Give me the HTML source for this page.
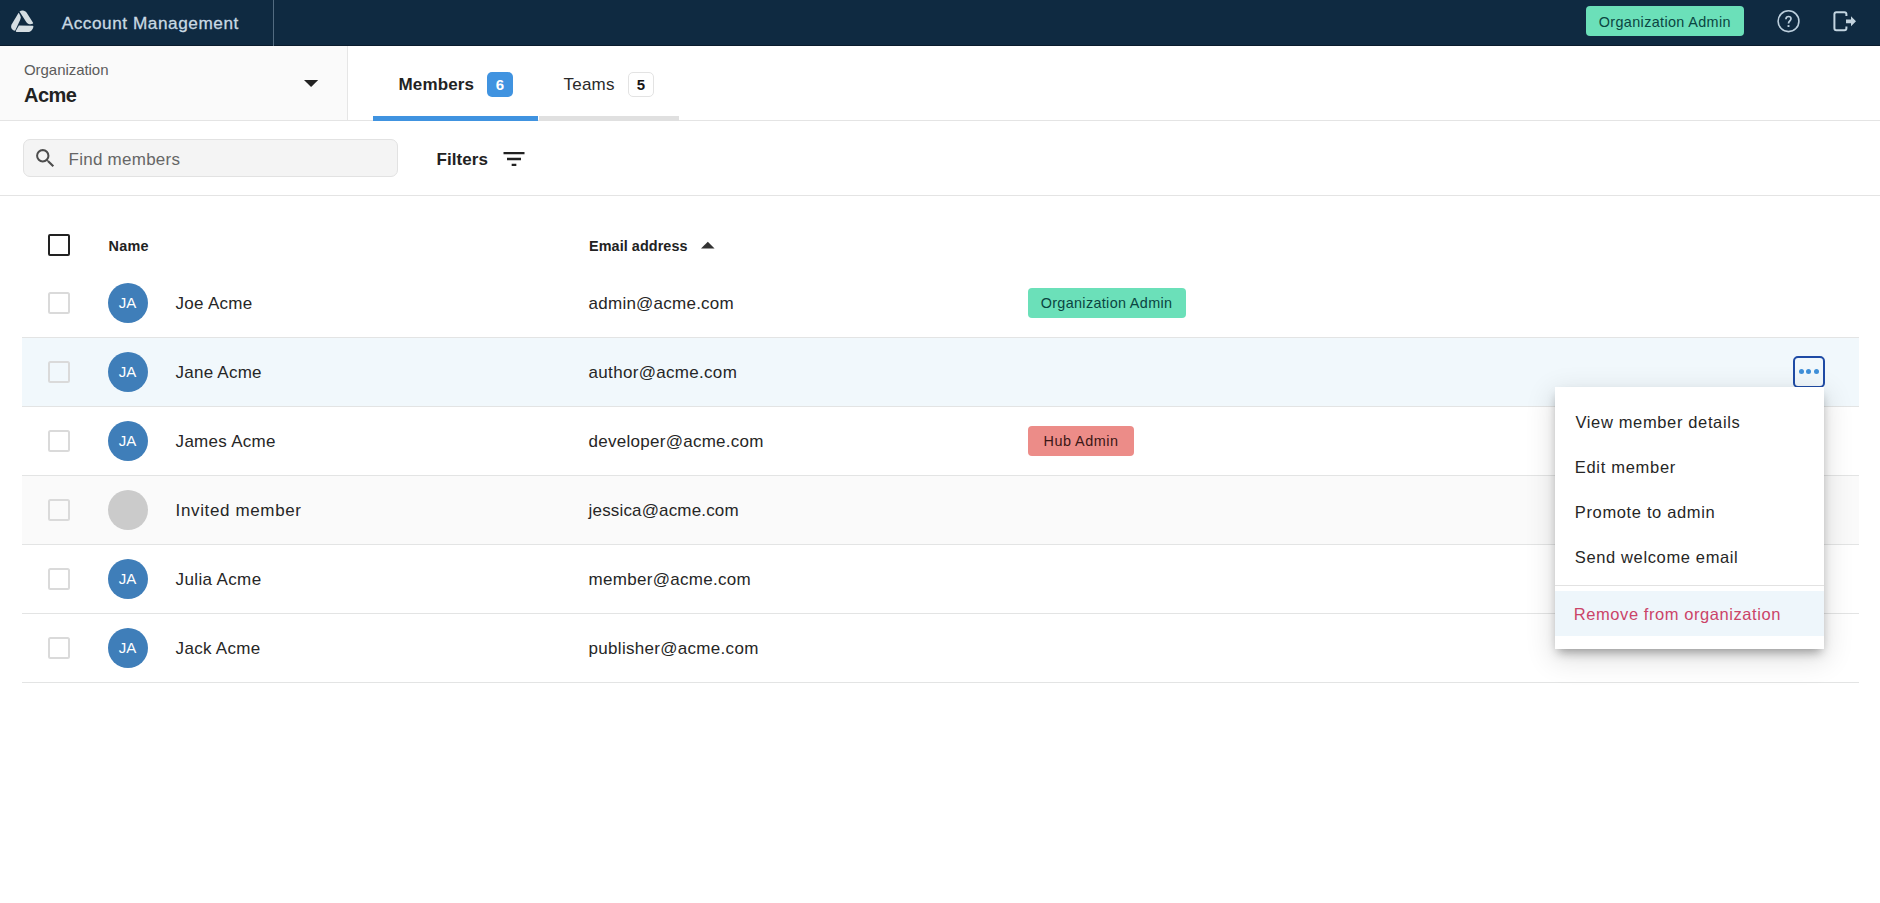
<!DOCTYPE html>
<html lang="en">
<head>
<meta charset="utf-8">
<title>Account Management</title>
<style>
html,body{margin:0;padding:0;}
body{width:1880px;height:903px;position:relative;overflow:hidden;background:#fff;font-family:"Liberation Sans",sans-serif;}
.a{position:absolute;}
.t{position:absolute;white-space:nowrap;font-family:"Liberation Sans",sans-serif;}
#hdr{left:0;top:0;width:1880px;height:46px;background:#0f2a41;box-shadow:inset 0 -1px 0 #0a1c2d;}
#hsep{left:273px;top:0;width:1px;height:46px;background:#526b80;}
.badge{border-radius:4px;height:30px;}
.green{background:#6be0b9;}
.red{background:#ec8c88;}
#org{left:0;top:46px;width:347px;height:74px;background:#fafafa;}
#orgsep{left:347px;top:46px;width:1px;height:74px;background:#e6e6e6;}
#hline{left:0;top:120px;width:1880px;height:1px;background:#e4e4e4;}
#tabu1{left:373px;top:116px;width:165px;height:5px;background:#4093e0;}
#tabu2{left:539px;top:116px;width:140px;height:5px;background:#e0e0e0;}
#cnt1{left:487px;top:72px;width:26px;height:25px;border-radius:5px;background:#4093e0;}
#cnt2{left:628px;top:72px;width:24px;height:23px;border-radius:5px;background:#fff;border:1px solid #e3e3e3;}
.cn{position:absolute;font-weight:700;font-size:15px;line-height:25.6px;text-align:center;width:26px;}
#search{left:23px;top:139px;width:373px;height:36px;border:1px solid #e2e2e2;border-radius:7px;background:#f4f4f4;}
#line2{left:0;top:195px;width:1880px;height:1px;background:#e4e4e4;}
.cb{left:48px;width:18px;height:18px;border:2px solid #dadada;border-radius:2.5px;background:transparent;}
#cbh{top:234px;border-color:#222;border-radius:2px;}
.row{left:22px;width:1837px;height:68px;border-bottom:1px solid #e3e4e4;}
.av{left:108px;width:40px;height:40px;border-radius:50%;background:#3f7eb9;}
#menu{left:1555px;top:387px;width:269px;height:262px;background:#fff;box-shadow:0 6px 10px -3px rgba(0,0,0,.36),0 8px 26px 3px rgba(0,0,0,.12);}
#msep{left:0;top:198px;width:269px;height:1px;background:#e2e2e2;}
#mhl{left:0;top:204px;width:269px;height:45px;background:#eef6fb;}
#dots{left:1793px;top:356px;width:28px;height:28px;border:2px solid #1f4ba5;border-radius:5px;}
.dot{position:absolute;width:5px;height:5px;border-radius:50%;background:#3f8fd8;top:10.9px;}
</style>
</head>
<body>
<div class="a" id="hdr"></div>
<div class="a" id="hsep"></div>
<svg class="a" style="left:8px;top:6px" width="30" height="30" viewBox="8 6 30 30">
  <g fill="#d5dee3">
    <path d="M18.6 12.7 C19.6 14.2 20.5 15.6 20.7 17.2 C20.8 18.3 20.5 19.2 20.0 20.3 L15.1 30.7 C13.4 30.6 12.2 29.7 11.6 28.6 C10.9 27.3 11.0 26.0 11.6 24.6 Z"/>
    <path d="M19.5 11.4 C20.5 10.6 21.6 10.3 22.8 10.4 C24.4 10.5 25.7 11.3 26.7 12.7 L32.9 22.5 C33.3 23.2 33.2 23.5 32.6 23.8 C31.4 24.3 29.8 24.3 28.6 23.9 C27.6 23.5 27.0 23.0 26.4 22.2 Z"/>
    <path d="M18.9 25.4 L32.8 25.8 C33.4 25.9 33.5 26.3 33.3 27.2 C33.0 28.3 32.6 29.2 31.9 30.0 C31.1 31.0 30.2 31.7 28.9 31.9 L16.5 31.9 C15.9 31.8 15.7 31.4 15.9 30.8 Z"/>
  </g>
</svg>
<div class="a badge green" style="left:1586px;top:6px;width:158px;"></div>
<svg class="a" style="left:1776px;top:9px" width="25" height="25" viewBox="0 0 25 25">
  <circle cx="12.5" cy="12.2" r="10.4" fill="none" stroke="#bccfdd" stroke-width="1.6"/>
  <path d="M9.9 10.2 C9.9 8.4 11.0 7.5 12.5 7.5 C14.0 7.5 15.0 8.4 15.0 9.8 C15.0 11.8 12.5 12.2 12.5 14.6" fill="none" stroke="#bccfdd" stroke-width="1.7"/>
  <rect x="11.55" y="16.1" width="1.9" height="1.9" fill="#bccfdd"/>
</svg>
<svg class="a" style="left:1830px;top:8px" width="30" height="27" viewBox="1830 8 30 27">
  <path d="M1846.4 16.0 V14.2 Q1846.4 12.2 1844.4 12.2 H1836.4 Q1834.4 12.2 1834.4 14.2 V28.3 Q1834.4 30.3 1836.4 30.3 H1844.4 Q1846.4 30.3 1846.4 28.3 V26.6" fill="none" stroke="#c3d5e1" stroke-width="2"/>
  <path d="M1846 19.4 H1851 V16.3 L1856 21.3 L1851 26.3 V23.2 H1846 Z" fill="#c3d3de"/>
</svg>

<div class="a" id="org"></div>
<div class="a" id="orgsep"></div>
<svg class="a" style="left:300px;top:76px" width="22" height="15" viewBox="300 76 22 15"><path d="M304 80 H318.2 L311.1 87.1 Z" fill="#222"/></svg>
<div class="a" id="hline"></div>
<div class="a" id="tabu2"></div>
<div class="a" id="tabu1"></div>
<div class="a" id="cnt1"></div>
<div class="a" id="cnt2"></div>
<span class="cn" style="left:487px;top:72px;color:#fff;">6</span>
<span class="cn" style="left:628px;top:72px;color:#161616;">5</span>

<div class="a" id="search"></div>
<svg class="a" style="left:32.7px;top:146.3px" width="24.7" height="24.7" viewBox="0 0 24 24"><path fill="#4d4d4d" d="M15.5 14h-.79l-.28-.27A6.471 6.471 0 0 0 16 9.5 6.5 6.5 0 1 0 9.5 16c1.61 0 3.09-.59 4.23-1.57l.27.28v.79l5 4.99L20.49 19l-4.99-5zm-6 0C7.01 14 5 11.99 5 9.500S7.01 5 9.5 5 14 7.01 14 9.500 11.99 14 9.5 14z"/></svg>
<svg class="a" style="left:500px;top:145px" width="28" height="28" viewBox="0 0 24 24"><path fill="#222" d="M10 18h4v-2h-4v2zM3 6v2h18V6H3zm3 7h12v-2H6v2z"/></svg>
<div class="a" id="line2"></div>

<div class="a cb" id="cbh"></div>
<svg class="a" style="left:698px;top:238px" width="20" height="14" viewBox="698 238 20 14"><path d="M701 248.6 H714.6 L707.8 241.8 Z" fill="#333"/></svg>

<div class="a row" style="top:269px;background:transparent;"></div>
<div class="a cb" style="top:292px;"></div>
<div class="a av" style="top:283px;background:#3f7eb9;"></div>
<div class="a row" style="top:338px;background:#f1f8fc;"></div>
<div class="a cb" style="top:361px;"></div>
<div class="a av" style="top:352px;background:#3f7eb9;"></div>
<div class="a row" style="top:407px;background:transparent;"></div>
<div class="a cb" style="top:430px;"></div>
<div class="a av" style="top:421px;background:#3f7eb9;"></div>
<div class="a row" style="top:476px;background:#fafafa;"></div>
<div class="a cb" style="top:499px;"></div>
<div class="a av" style="top:490px;background:#cbcbcb;"></div>
<div class="a row" style="top:545px;background:transparent;"></div>
<div class="a cb" style="top:568px;"></div>
<div class="a av" style="top:559px;background:#3f7eb9;"></div>
<div class="a row" style="top:614px;background:transparent;"></div>
<div class="a cb" style="top:637px;"></div>
<div class="a av" style="top:628px;background:#3f7eb9;"></div>
<div class="a badge green" style="left:1028px;top:288px;width:158px;"></div>
<div class="a badge red" style="left:1028px;top:426px;width:106px;"></div>

<div class="a" id="dots"><i class="dot" style="left:3.6px"></i><i class="dot" style="left:11px"></i><i class="dot" style="left:18.7px"></i></div>
<div class="a" id="menu"><div class="a" id="msep"></div><div class="a" id="mhl"></div></div>

<span class="t" style="left:61.70px;top:12.13px;line-height:22px;font-size:17.2px;font-weight:400;color:#c9d9e3;letter-spacing:0.553px;-webkit-text-stroke:0.3px #c9d9e3;">Account Management</span>
<span class="t" style="left:24.00px;top:59.84px;line-height:20px;font-size:15px;font-weight:400;color:#5c5c5c;letter-spacing:-0.051px;">Organization</span>
<span class="t" style="left:24.00px;top:82.11px;line-height:26px;font-size:20px;font-weight:700;color:#222;letter-spacing:-0.495px;">Acme</span>
<span class="t" style="left:398.50px;top:74.05px;line-height:22px;font-size:17px;font-weight:700;color:#222;letter-spacing:0.143px;">Members</span>
<span class="t" style="left:563.50px;top:74.05px;line-height:22px;font-size:17px;font-weight:400;color:#2a2a2a;letter-spacing:0.230px;">Teams</span>
<span class="t" style="left:68.50px;top:149.15px;line-height:22px;font-size:17px;font-weight:400;color:#666;letter-spacing:0.260px;">Find members</span>
<span class="t" style="left:436.50px;top:148.75px;line-height:22px;font-size:17px;font-weight:700;color:#222;letter-spacing:0.078px;">Filters</span>
<span class="t" style="left:108.50px;top:236.55px;line-height:19px;font-size:14.4px;font-weight:700;color:#222;letter-spacing:0.266px;">Name</span>
<span class="t" style="left:589.00px;top:236.85px;line-height:19px;font-size:14.4px;font-weight:700;color:#222;letter-spacing:0.076px;">Email address</span>
<span class="t" style="left:1598.80px;top:12.75px;line-height:19px;font-size:14.4px;font-weight:400;color:#0a4541;letter-spacing:0.359px;">Organization Admin</span>
<span class="t" style="left:1040.70px;top:294.15px;line-height:19px;font-size:14.4px;font-weight:400;color:#0a4541;letter-spacing:0.336px;">Organization Admin</span>
<span class="t" style="left:1043.50px;top:432.15px;line-height:19px;font-size:14.4px;font-weight:400;color:#3b1716;letter-spacing:0.499px;">Hub Admin</span>
<span class="t" style="left:1575.44px;top:411.82px;line-height:21px;font-size:16.5px;font-weight:400;color:#262626;letter-spacing:0.640px;">View member details</span>
<span class="t" style="left:1574.80px;top:456.82px;line-height:21px;font-size:16.5px;font-weight:400;color:#262626;letter-spacing:0.697px;">Edit member</span>
<span class="t" style="left:1574.80px;top:501.82px;line-height:21px;font-size:16.5px;font-weight:400;color:#262626;letter-spacing:0.644px;">Promote to admin</span>
<span class="t" style="left:1574.80px;top:546.82px;line-height:21px;font-size:16.5px;font-weight:400;color:#262626;letter-spacing:0.632px;">Send welcome email</span>
<span class="t" style="left:1573.84px;top:603.82px;line-height:21px;font-size:16.5px;font-weight:400;color:#cb4468;letter-spacing:0.565px;">Remove from organization</span>
<span class="t" style="left:175.60px;top:292.65px;line-height:22px;font-size:17px;font-weight:400;color:#262626;letter-spacing:0.278px;">Joe Acme</span>
<span class="t" style="left:175.60px;top:361.65px;line-height:22px;font-size:17px;font-weight:400;color:#262626;letter-spacing:0.224px;">Jane Acme</span>
<span class="t" style="left:175.60px;top:430.65px;line-height:22px;font-size:17px;font-weight:400;color:#262626;letter-spacing:0.288px;">James Acme</span>
<span class="t" style="left:175.60px;top:499.65px;line-height:22px;font-size:17px;font-weight:400;color:#262626;letter-spacing:0.633px;">Invited member</span>
<span class="t" style="left:175.60px;top:568.65px;line-height:22px;font-size:17px;font-weight:400;color:#262626;letter-spacing:0.366px;">Julia Acme</span>
<span class="t" style="left:175.60px;top:637.65px;line-height:22px;font-size:17px;font-weight:400;color:#262626;letter-spacing:0.300px;">Jack Acme</span>
<span class="t" style="left:588.60px;top:292.65px;line-height:22px;font-size:17px;font-weight:400;color:#262626;letter-spacing:0.241px;">admin@acme.com</span>
<span class="t" style="left:588.60px;top:361.65px;line-height:22px;font-size:17px;font-weight:400;color:#262626;letter-spacing:0.309px;">author@acme.com</span>
<span class="t" style="left:588.60px;top:430.65px;line-height:22px;font-size:17px;font-weight:400;color:#262626;letter-spacing:0.264px;">developer@acme.com</span>
<span class="t" style="left:588.60px;top:499.65px;line-height:22px;font-size:17px;font-weight:400;color:#262626;letter-spacing:0.159px;">jessica@acme.com</span>
<span class="t" style="left:588.60px;top:568.65px;line-height:22px;font-size:17px;font-weight:400;color:#262626;letter-spacing:0.285px;">member@acme.com</span>
<span class="t" style="left:588.60px;top:637.65px;line-height:22px;font-size:17px;font-weight:400;color:#262626;letter-spacing:0.297px;">publisher@acme.com</span>
<span class="t" style="left:118.70px;top:293.14px;line-height:20px;font-size:15px;font-weight:400;color:#ffffff;letter-spacing:0.184px;">JA</span>
<span class="t" style="left:118.70px;top:362.14px;line-height:20px;font-size:15px;font-weight:400;color:#ffffff;letter-spacing:0.184px;">JA</span>
<span class="t" style="left:118.70px;top:431.14px;line-height:20px;font-size:15px;font-weight:400;color:#ffffff;letter-spacing:0.184px;">JA</span>
<span class="t" style="left:118.70px;top:569.14px;line-height:20px;font-size:15px;font-weight:400;color:#ffffff;letter-spacing:0.184px;">JA</span>
<span class="t" style="left:118.70px;top:638.14px;line-height:20px;font-size:15px;font-weight:400;color:#ffffff;letter-spacing:0.184px;">JA</span>
</body>
</html>
